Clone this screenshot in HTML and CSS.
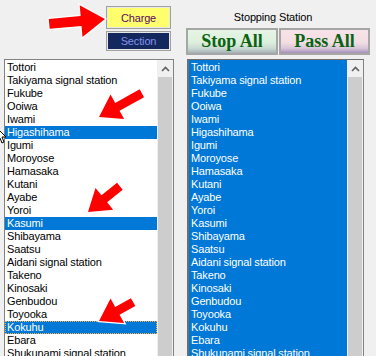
FILE: index.html
```html
<!DOCTYPE html>
<html lang="en">
<head>
  <meta charset="UTF-8" />
  <title>Stopping Station</title>
  <link rel="stylesheet" href="styles.css">
</head>
<body>
  <div class="window">
    <div class="left-head">
      <div class="mode-buttons">
        <button class="btn-charge">Charge</button>
        <button class="btn-section">Section</button>
      </div>
    </div>

    <div class="right-head">
      <div class="head-label">Stopping Station</div>
      <div class="bulk-buttons">
        <button class="btn-stop">Stop All</button>
        <button class="btn-pass">Pass All</button>
      </div>
    </div>

    <!-- All stations -->
    <div class="listbox listbox-left">
      <ul class="items" id="allList"></ul>
      <div class="vscroll">
        <div class="vscroll-up">
          <svg width="9" height="6" viewBox="0 0 9 6"><path d="M1 5 L4.5 1.5 L8 5" /></svg>
        </div>
        <div class="vscroll-thumb"></div>
      </div>
    </div>

    <!-- Stopping stations -->
    <div class="listbox listbox-right">
      <ul class="items items-blue" id="stopList"></ul>
      <div class="vscroll">
        <div class="vscroll-up">
          <svg width="9" height="6" viewBox="0 0 9 6"><path d="M1 5 L4.5 1.5 L8 5" /></svg>
        </div>
        <div class="vscroll-thumb"></div>
      </div>
    </div>

    <svg class="arrows" width="376" height="356" viewBox="0 0 376 356">
      <polygon transform="translate(105,19) rotate(-5)" points="0,0 -24,-16 -24,-5 -56,-5 -56,5 -24,5 -24,16" />
      <polygon transform="translate(99,117) rotate(151)" points="0,0 -21,-14 -21,-4.5 -49,-4.5 -49,4.5 -21,4.5 -21,14" />
      <polygon transform="translate(88,212) rotate(141)" points="0,0 -21,-14 -21,-4.5 -41,-4.5 -41,4.5 -21,4.5 -21,14" />
      <polygon transform="translate(99,321) rotate(151)" points="0,0 -21,-14 -21,-4.5 -39,-4.5 -39,4.5 -21,4.5 -21,14" />
      <!-- mouse pointer peeking in at the left edge -->
      <path class="cursor" d="M-3 128 L6 137 L2 137 L4 142 L2 143 L0 138 L-3 141 Z" />
    </svg>
  </div>

  <script>
    const stations = [
      "Tottori", "Takiyama signal station", "Fukube", "Ooiwa", "Iwami",
      "Higashihama", "Igumi", "Moroyose", "Hamasaka", "Kutani", "Ayabe",
      "Yoroi", "Kasumi", "Shibayama", "Saatsu", "Aidani signal station",
      "Takeno", "Kinosaki", "Genbudou", "Toyooka", "Kokuhu", "Ebara",
      "Shukunami signal station"
    ];
    const picked = [5, 12, 20];
    const focused = 20;

    function fillList(id, markPicked) {
      const list = document.getElementById(id);
      stations.forEach((name, i) => {
        const li = document.createElement("li");
        li.textContent = name;
        if (markPicked && picked.includes(i)) li.className = "selected";
        if (markPicked && i === focused) li.className += " focus";
        list.appendChild(li);
      });
    }

    fillList("allList", true);
    fillList("stopList", false);
  </script>
</body>
</html>
```

FILE: styles.css
```css
body {
  margin: 0;
  background: #f0f0f0;
  font-family: "Liberation Sans", Arial, sans-serif;
  font-size: 11px;
  letter-spacing: -0.15px;
  color: #000;
  overflow: hidden;
}

.window {
  position: relative;
  width: 376px;
  height: 356px;
  overflow: hidden;
  display: grid;
  grid-template-columns: 170px 177px;
  grid-template-rows: 59px 310px;
  column-gap: 13px;
  padding-left: 4px;
  box-sizing: border-box;
}

/* Header, left side */
.left-head {
  display: flex;
  justify-content: flex-end;
  padding: 6px 3px 0 0;
}

.mode-buttons {
  display: flex;
  flex-direction: column;
  gap: 2px;
}

.mode-buttons button {
  width: 65px;
  font: inherit;
  letter-spacing: inherit;
  padding: 0;
  border: 1px solid #a0a0a0;
  box-shadow: inset 0 0 0 1px #e8e8e8;
  cursor: pointer;
}

.btn-charge {
  height: 23px;
  background: #ffff6e;
  color: #5e0a60;
}

.btn-section {
  height: 20px;
  background: #13285c;
  color: #8590ee;
  box-shadow: inset 0 0 0 1px #2c3c70;
}

/* Header, right side */
.right-head {
  width: 184px;
  margin-left: -1px;
  padding-top: 11px;
}

.head-label {
  height: 13px;
  line-height: 13px;
  text-align: center;
  padding-right: 10px;
  margin-bottom: 4px;
}

.bulk-buttons {
  display: flex;
  gap: 1px;
}

.bulk-buttons button {
  height: 27px;
  padding: 0;
  border: 2px solid #a6a6a6;
  font: bold 18px "Liberation Serif", "Times New Roman", serif;
  letter-spacing: 0;
  color: #0b6212;
  cursor: pointer;
}

.btn-stop {
  width: 92px;
  background: linear-gradient(to bottom, #e6f5e6 0%, #dcefdc 55%, #cbd9d2 80%, #a3b1b6 100%);
}

.btn-pass {
  width: 91px;
  background: linear-gradient(to bottom, #f7e3e7 0%, #f2dde3 55%, #d8c5d8 80%, #a68fb9 100%);
}

/* List boxes */
.listbox {
  display: flex;
  background: #fff;
  border: 1px solid #828282;
  box-sizing: border-box;
}

.listbox-right {
  border-left: 2px solid #6e6e6e;
  border-top: 1px solid #6e6e6e;
}

.items {
  list-style: none;
  margin: 0;
  padding: 1px 0 0 0;
  width: 152px;
}

.listbox-right .items {
  width: 158px;
}

.items li {
  height: 13px;
  line-height: 13px;
  padding-left: 2px;
  white-space: nowrap;
  overflow: hidden;
  box-sizing: border-box;
}

.items li.selected {
  background: #0078d7;
  color: #fff;
}

.items li.focus {
  outline: 1px dotted #f6b24a;
  outline-offset: -1px;
}

.items-blue {
  background: #0078d7;
  color: #fff;
}

.vscroll {
  width: 16px;
  display: flex;
  flex-direction: column;
  background: #f0f0f0;
}

.vscroll-up {
  height: 17px;
  display: flex;
  align-items: center;
  justify-content: center;
}

.vscroll-up path {
  fill: none;
  stroke: #606060;
  stroke-width: 1.6;
}

.vscroll-thumb {
  flex: 1;
  margin: 0 1px;
  background: #cdcdcd;
}

/* Red pointer arrows over the form */
.arrows {
  position: absolute;
  top: 0;
  left: 0;
  pointer-events: none;
}

.arrows polygon {
  fill: #ff0000;
  stroke: #fff;
  stroke-width: 2.5;
  paint-order: stroke;
  stroke-linejoin: miter;
}

.arrows .cursor {
  fill: #fff;
  stroke: #000;
  stroke-width: 1;
}
```
